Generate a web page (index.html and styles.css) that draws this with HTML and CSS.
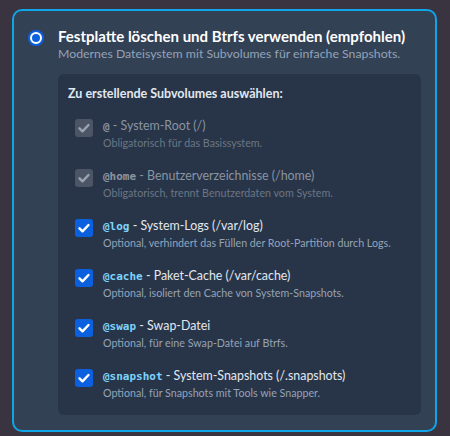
FILE: index.html
```html
<!DOCTYPE html>
<html lang="de">
<head>
<meta charset="utf-8">
<link rel="stylesheet" href="styles.css">
</head>
<body>
<div class="wrap">
  <div class="card">
    <span class="radio"><span class="radio-dot"></span></span>
    <div class="content">
      <div class="title">Festplatte löschen und Btrfs verwenden (empfohlen)</div>
      <div class="subtitle">Modernes Dateisystem mit Subvolumes für einfache Snapshots.</div>
      <div class="panel">
        <div class="panel-head">Zu erstellende Subvolumes auswählen:</div>
        <div class="row disabled">
          <span class="box"><svg viewBox="0 0 18 18"><path d="M4.5 9.3l3 3 6-6.3"/></svg></span>
          <div class="text">
            <div class="label"><code>@</code> - System-Root (/)</div>
            <div class="desc">Obligatorisch für das Basissystem.</div>
          </div>
        </div>
        <div class="row disabled">
          <span class="box"><svg viewBox="0 0 18 18"><path d="M4.5 9.3l3 3 6-6.3"/></svg></span>
          <div class="text">
            <div class="label"><code>@home</code> - Benutzerverzeichnisse (/home)</div>
            <div class="desc">Obligatorisch, trennt Benutzerdaten vom System.</div>
          </div>
        </div>
        <div class="row">
          <span class="box"><svg viewBox="0 0 18 18"><path d="M4.5 9.3l3 3 6-6.3"/></svg></span>
          <div class="text">
            <div class="label"><code>@log</code> - System-Logs (/var/log)</div>
            <div class="desc">Optional, verhindert das Füllen der Root-Partition durch Logs.</div>
          </div>
        </div>
        <div class="row">
          <span class="box"><svg viewBox="0 0 18 18"><path d="M4.5 9.3l3 3 6-6.3"/></svg></span>
          <div class="text">
            <div class="label"><code>@cache</code> - Paket-Cache (/var/cache)</div>
            <div class="desc">Optional, isoliert den Cache von System-Snapshots.</div>
          </div>
        </div>
        <div class="row">
          <span class="box"><svg viewBox="0 0 18 18"><path d="M4.5 9.3l3 3 6-6.3"/></svg></span>
          <div class="text">
            <div class="label"><code>@swap</code> - Swap-Datei</div>
            <div class="desc">Optional, für eine Swap-Datei auf Btrfs.</div>
          </div>
        </div>
        <div class="row">
          <span class="box"><svg viewBox="0 0 18 18"><path d="M4.5 9.3l3 3 6-6.3"/></svg></span>
          <div class="text">
            <div class="label"><code>@snapshot</code> - System-Snapshots (/.snapshots)</div>
            <div class="desc">Optional, für Snapshots mit Tools wie Snapper.</div>
          </div>
        </div>
      </div>
    </div>
  </div>
</div>
</body>
</html>
```
FILE: styles.css
```css
* { box-sizing: border-box; }
html, body { margin: 0; padding: 0; }
body {
  background: #3a3440;
  font-family: "Lato", "Open Sans", sans-serif;
  color: #e2e8f0;
}
.wrap {
  padding: 9px 13px 4px 12px;
}
.card {
  height: 423px;
  border: 2px solid #0ea5e9;
  border-radius: 10px;
  background: #334155;
  padding: 16px 14px 15px 14px;
  display: flex;
  gap: 14px;
}
.radio {
  flex: none;
  width: 16px;
  height: 16px;
  margin-top: 3px;
  border-radius: 50%;
  background: #0b60e0;
  display: flex;
  align-items: center;
  justify-content: center;
}
.radio-dot {
  width: 12px;
  height: 12px;
  border-radius: 50%;
  border: 2px solid #ffffff;
  background: #0b60e0;
}
.content {
  flex: 1;
  min-width: 0;
  display: flex;
  flex-direction: column;
}
.title {
  font-size: 15px;
  font-weight: 700;
  line-height: 19px;
  color: #ffffff;
  white-space: nowrap;
}
.subtitle {
  font-size: 12.3px;
  line-height: 16px;
  color: #94a3b8;
  white-space: nowrap;
}
.panel {
  margin-top: 12px;
  flex: 1;
  background: #283548;
  border-radius: 6px;
  padding: 11px 10px 7px 10px;
}
.panel-head {
  font-size: 12.5px;
  font-weight: 700;
  line-height: 18px;
  color: #e2e8f0;
  margin-bottom: 5px;
}
.row {
  display: flex;
  gap: 10px;
  padding: 9px 7px 8px 7px;
  height: 50px;
}
.box {
  flex: none;
  width: 18px;
  height: 18px;
  margin-top: 2px;
  border-radius: 3px;
  background: #0b60e0;
  display: flex;
}
.box svg {
  width: 18px;
  height: 18px;
  fill: none;
  stroke: #ffffff;
  stroke-width: 2.4;
  stroke-linecap: round;
  stroke-linejoin: round;
}
.text { min-width: 0; }
.label {
  font-size: 12.4px;
  line-height: 17px;
  color: #e2e8f0;
  white-space: nowrap;
}
.label code {
  font-family: "DejaVu Sans Mono", "Liberation Mono", monospace;
  font-weight: 700;
  font-size: 11px;
  color: #7dd3fc;
}
.desc {
  font-size: 10.7px;
  line-height: 16px;
  color: #94a3b8;
  white-space: nowrap;
}
.disabled .box { background: #4b5565; }
.disabled .box svg { stroke: #9aa3b0; }
.disabled .label { color: #8a94a3; }
.disabled .label code { color: #8a94a3; }
.disabled .desc { color: #6b7585; }
```
